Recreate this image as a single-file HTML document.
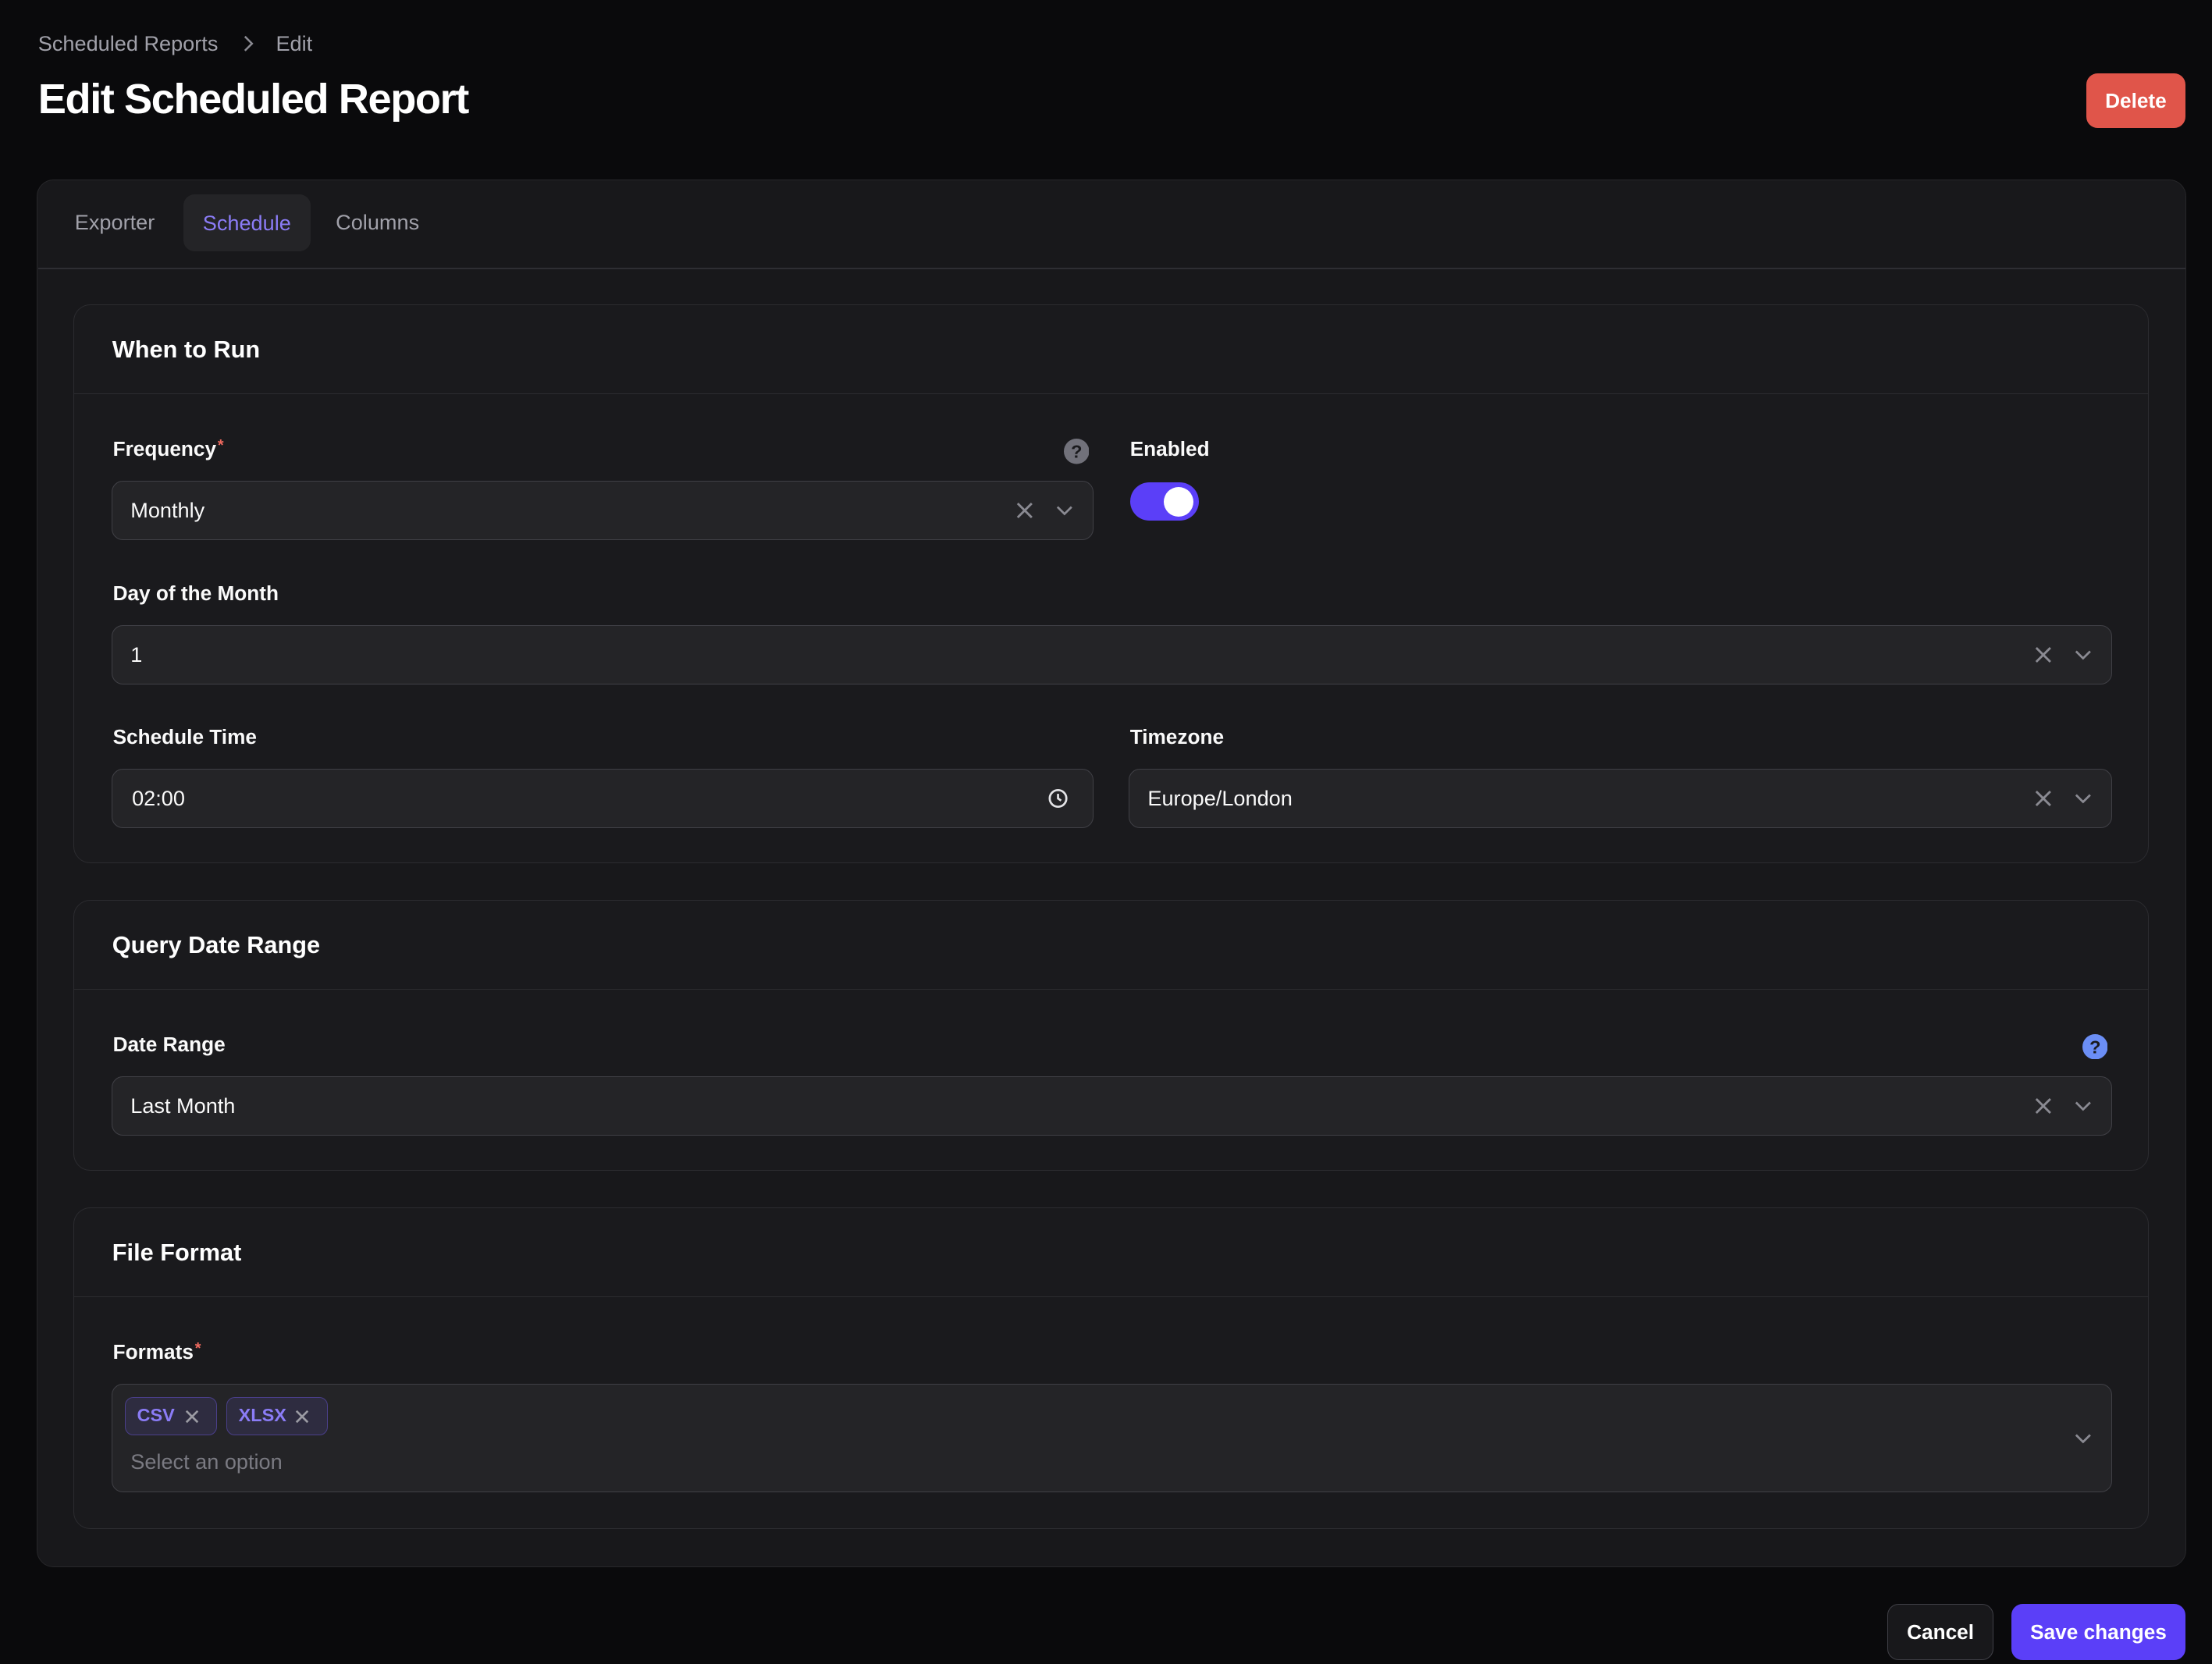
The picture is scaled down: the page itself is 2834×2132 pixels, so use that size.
<!DOCTYPE html>
<html><head><meta charset="utf-8"><style>
*{box-sizing:border-box;margin:0;padding:0}
html,body{background:#0a0a0c;width:2834px;height:2132px;overflow:hidden}
#r{zoom:1.8074;width:1568px;height:1180px;position:relative;font-family:"Liberation Sans",sans-serif;color:#fff}
.a{position:absolute}
.lbl{position:absolute;font-size:14.5px;font-weight:600;color:#fafafa}
.inp{position:absolute;background:#242427;border:1px solid #404046;border-radius:8px;font-size:15px;color:#fafafa;padding-left:13px;display:flex;align-items:center}
.sec{position:absolute;left:52px;width:1471px;border:1px solid #2c2c30;border-radius:12px;background:#1a1a1d}
.sh{height:63px;border-bottom:1px solid #2c2c30;padding-left:27px;display:flex;align-items:center;font-size:17px;font-weight:700}
.ic{position:absolute;top:50%;transform:translateY(-50%)}
.star{color:#ef6a5f;font-size:11px;vertical-align:top;margin-left:1px}
</style></head><body><div id="r">
<div class="a" style="left:27px;top:22px;font-size:15px;color:#a1a1aa;display:flex;align-items:center">Scheduled Reports<svg style="margin:0 16px 0 18px" width="7" height="12" viewBox="0 0 7 12"><path d="M1 1L6 6L1 11" stroke="#8a8a92" stroke-width="1.4" fill="none"/></svg>Edit</div>
<div class="a" style="left:27px;top:53px;font-size:30px;font-weight:700;letter-spacing:-0.8px">Edit Scheduled Report</div>
<div class="a" style="left:1479px;top:52px;width:70px;height:39px;background:#e0554a;border-radius:8px;font-size:14.5px;font-weight:700;display:flex;align-items:center;justify-content:center">Delete</div>

<div class="a" style="left:26px;top:127px;width:1524px;height:984px;background:#18181b;border:1px solid #27272a;border-radius:12px"></div>
<div class="a" style="left:27px;top:190px;width:1522px;height:1px;background:#2e2e33"></div>
<div class="a" style="left:53px;top:149px;font-size:15px;color:#a1a1aa">Exporter</div>
<div class="a" style="left:130px;top:138px;width:90px;height:40px;background:#242427;border-radius:8px;color:#8b7cf6;font-size:15px;display:flex;align-items:center;justify-content:center">Schedule</div>
<div class="a" style="left:238px;top:149px;font-size:15px;color:#a1a1aa">Columns</div>

<div class="sec" style="top:216px;height:396px"><div class="sh">When to Run</div></div>
<div class="lbl" style="left:80px;top:310px">Frequency<span class="star">*</span></div>
<svg class="a" style="left:754px;top:311px" width="18" height="18" viewBox="0 0 18 18"><circle cx="9" cy="9" r="9" fill="#71717a"/><text x="9" y="13.5" font-size="13" font-weight="700" text-anchor="middle" fill="#1a1a1d" font-family="Liberation Sans">?</text></svg>
<div class="inp" style="left:79px;top:341px;width:696px;height:42px">Monthly
<svg class="ic" style="right:42px" width="12" height="12" viewBox="0 0 12 12"><path d="M1 1L11 11M11 1L1 11" stroke="#8a8a92" stroke-width="1.6"/></svg>
<svg class="ic" style="right:14px" width="12" height="8" viewBox="0 0 12 8"><path d="M1 1.5L6 6.5L11 1.5" stroke="#8a8a92" stroke-width="1.5" fill="none"/></svg></div>
<div class="lbl" style="left:801px;top:310px">Enabled</div>
<div class="a" style="left:801px;top:342px;width:49px;height:27px;background:#5b3ff8;border-radius:14px"><div class="a" style="left:24px;top:3px;width:21px;height:21px;background:#fff;border-radius:50%"></div></div>

<div class="lbl" style="left:80px;top:412px">Day of the Month</div>
<div class="inp" style="left:79px;top:443px;width:1418px;height:42px">1
<svg class="ic" style="right:42px" width="12" height="12" viewBox="0 0 12 12"><path d="M1 1L11 11M11 1L1 11" stroke="#8a8a92" stroke-width="1.6"/></svg>
<svg class="ic" style="right:14px" width="12" height="8" viewBox="0 0 12 8"><path d="M1 1.5L6 6.5L11 1.5" stroke="#8a8a92" stroke-width="1.5" fill="none"/></svg></div>

<div class="lbl" style="left:80px;top:514px">Schedule Time</div>
<div class="inp" style="left:79px;top:545px;width:696px;height:42px;padding-left:14px">02:00
<svg class="ic" style="right:17px" width="15" height="15" viewBox="0 0 16 16"><circle cx="8" cy="8" r="6.3" stroke="#e4e4e7" stroke-width="1.6" fill="none"/><path d="M8 4.5V8L10.3 9.6" stroke="#e4e4e7" stroke-width="1.6" fill="none"/></svg></div>
<div class="lbl" style="left:801px;top:514px">Timezone</div>
<div class="inp" style="left:800px;top:545px;width:697px;height:42px">Europe/London
<svg class="ic" style="right:42px" width="12" height="12" viewBox="0 0 12 12"><path d="M1 1L11 11M11 1L1 11" stroke="#8a8a92" stroke-width="1.6"/></svg>
<svg class="ic" style="right:14px" width="12" height="8" viewBox="0 0 12 8"><path d="M1 1.5L6 6.5L11 1.5" stroke="#8a8a92" stroke-width="1.5" fill="none"/></svg></div>

<div class="sec" style="top:638px;height:192px"><div class="sh">Query Date Range</div></div>
<div class="lbl" style="left:80px;top:732px">Date Range</div>
<svg class="a" style="left:1476px;top:733px" width="18" height="18" viewBox="0 0 18 18"><circle cx="9" cy="9" r="9" fill="#6b8ef5"/><text x="9" y="13.5" font-size="13" font-weight="700" text-anchor="middle" fill="#1a1a1d" font-family="Liberation Sans">?</text></svg>
<div class="inp" style="left:79px;top:763px;width:1418px;height:42px">Last Month
<svg class="ic" style="right:42px" width="12" height="12" viewBox="0 0 12 12"><path d="M1 1L11 11M11 1L1 11" stroke="#8a8a92" stroke-width="1.6"/></svg>
<svg class="ic" style="right:14px" width="12" height="8" viewBox="0 0 12 8"><path d="M1 1.5L6 6.5L11 1.5" stroke="#8a8a92" stroke-width="1.5" fill="none"/></svg></div>

<div class="sec" style="top:856px;height:228px"><div class="sh">File Format</div></div>
<div class="lbl" style="left:80px;top:950px">Formats<span class="star">*</span></div>
<div class="inp" style="left:79px;top:981px;width:1418px;height:77px">
<div class="a" style="left:9px;top:9px;width:65px;height:27px;border:1px solid #4a3f8a;background:#2e2c40;border-radius:6px;color:#8b7cf6;font-size:13px;font-weight:600;padding-left:8px;line-height:25px">CSV<svg style="position:absolute;left:42px;top:8px" width="10" height="10" viewBox="0 0 10 10"><path d="M1 1L9 9M9 1L1 9" stroke="#9a9aa2" stroke-width="1.5"/></svg></div>
<div class="a" style="left:81px;top:9px;width:72px;height:27px;border:1px solid #4a3f8a;background:#2e2c40;border-radius:6px;color:#8b7cf6;font-size:13px;font-weight:600;padding-left:8px;line-height:25px">XLSX<svg style="position:absolute;left:48px;top:8px" width="10" height="10" viewBox="0 0 10 10"><path d="M1 1L9 9M9 1L1 9" stroke="#9a9aa2" stroke-width="1.5"/></svg></div>
<div class="a" style="left:13px;top:46px;color:#7a7a82;font-size:15px">Select an option</div>
<svg class="ic" style="right:14px" width="12" height="8" viewBox="0 0 12 8"><path d="M1 1.5L6 6.5L11 1.5" stroke="#8a8a92" stroke-width="1.5" fill="none"/></svg></div>

<div class="a" style="left:1338px;top:1137px;width:75px;height:40px;border:1px solid #3f3f46;background:#18181b;border-radius:8px;font-size:14.5px;font-weight:700;display:flex;align-items:center;justify-content:center">Cancel</div>
<div class="a" style="left:1426px;top:1137px;width:123px;height:40px;background:#5b3ff8;border-radius:8px;font-size:14.5px;font-weight:700;display:flex;align-items:center;justify-content:center">Save changes</div>
</div></body></html>
